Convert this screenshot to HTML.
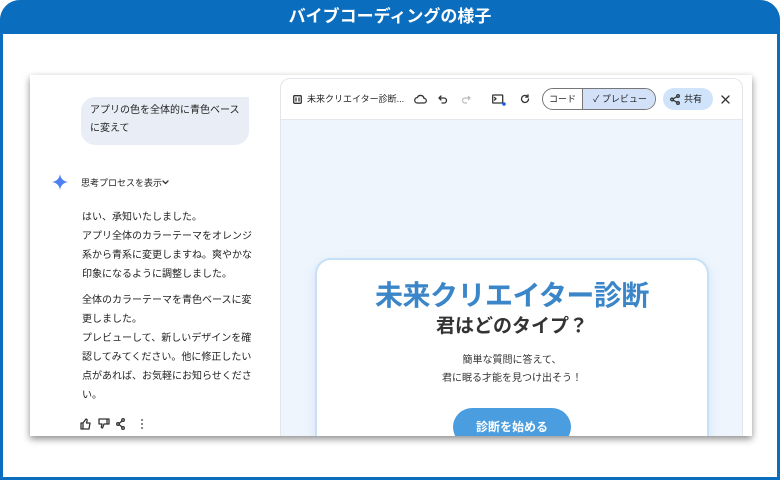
<!DOCTYPE html>
<html><head><meta charset="utf-8"><style>
*{margin:0;padding:0;box-sizing:border-box}
body{width:780px;height:480px;overflow:hidden;background:#fff;font-family:"Liberation Sans","Noto Sans CJK JP",sans-serif;position:relative}
.frame{position:absolute;left:0;top:0;width:780px;height:480px;border:3px solid #0a6dbd;border-top:none;border-radius:20px 20px 0 0}
.hdr{position:absolute;left:0;top:0;width:780px;height:34px;background:#0a6dbd;border-radius:20px 20px 0 0;color:#fff;font-weight:bold;font-size:17px;text-align:center;line-height:34px}
.shot{position:absolute;left:30px;top:75px;width:722px;height:361px;background:#fff;box-shadow:0 3px 7px rgba(0,0,0,.45);overflow:hidden}
.bubble{position:absolute;left:51px;top:22px;width:168px;height:48px;background:#e9eef6;border-radius:14px 0 14px 14px;font-size:10px;line-height:18px;padding:5px 9px;color:#222}
.t{position:absolute;font-size:10px;color:#222}
.msg{position:absolute;left:52px;top:133px;width:170px;font-size:10px;line-height:19px;color:#222}
.right{position:absolute;left:250px;top:3px;width:463px;height:370px;background:#eef5fd;border:1px solid #e2e6ea;border-radius:10px 10px 0 0;overflow:hidden}
.tb{height:41px;background:#fff;border-bottom:1px solid #e4e8ec;position:relative;font-size:9px;color:#222}
.tb span{position:absolute;top:0;line-height:41px}
.tb svg{position:absolute}
.card{position:absolute;left:34px;top:179px;width:394px;height:220px;background:#fff;border:2px solid #c5e0f7;border-radius:16px;text-align:center;box-shadow:0 4px 12px rgba(120,160,200,.2)}
svg .s{fill:none;stroke:#333;stroke-width:1.3;stroke-linecap:round;stroke-linejoin:round}
</style></head><body>
<div class="frame"></div>
<div class="hdr">バイブコーディングの様子</div>
<div class="shot">
 <div class="bubble">アプリの色を全体的に青色ベース<br>に変えて</div>
 <svg style="position:absolute;left:22px;top:99px" width="16" height="16" viewBox="0 0 16 16"><path d="M8 0C8.6 4.5 11.5 7.4 16 8C11.5 8.6 8.6 11.5 8 16C7.4 11.5 4.5 8.6 0 8C4.5 7.4 7.4 4.5 8 0Z" fill="#4c7ff0"/></svg>
 <div class="t" style="left:51px;top:101px;font-size:9px">思考プロセスを表示</div>
 <svg style="position:absolute;left:131px;top:103px" width="9" height="9" viewBox="0 0 9 9"><path class="s" d="M2 3L4.5 5.5L7 3" stroke-width="1.6"/></svg>
 <div class="msg">はい、承知いたしました。<br>アプリ全体のカラーテーマをオレンジ<br>系から青系に変更しますね。爽やかな<br>印象になるように調整しました。<div style="height:7px"></div>全体のカラーテーマを青色ベースに変<br>更しました。<br>プレビューして、新しいデザインを確<br>認してみてください。他に修正したい<br>点があれば、お気軽にお知らせくださ<br>い。</div>
 <svg style="position:absolute;left:50px;top:343px" width="70" height="12" viewBox="0 0 70 12">
  <path class="s" d="M1 5h2v6H1zM3 5l3-4c1 0 1.5 1 1 2L6.5 5H10l-1 6H3"/>
  <path class="s" d="M19 1h8v5h-3l-1.5 4c-1 0-1.5-1-1-2L22 6h-3zM27 1h2v5h-2"/>
  <circle class="s" cx="43" cy="2" r="1.3"/><circle class="s" cx="38" cy="6" r="1.3"/><circle class="s" cx="43" cy="10" r="1.3"/><path class="s" d="M39 5.5l3-2.5M39 6.5l3 2.5"/>
  <circle cx="62" cy="2" r="0.9" fill="#333"/><circle cx="62" cy="6" r="0.9" fill="#333"/><circle cx="62" cy="10" r="0.9" fill="#333"/>
 </svg>
 <div class="right">
  <div class="tb">
   <svg style="left:12px;top:16px" width="9" height="9" viewBox="0 0 9 9"><rect class="s" x=".7" y=".7" width="7.6" height="7.6" rx="1"/><path class="s" d="M3 3v3M6 3v3"/></svg>
   <span style="left:26px">未来クリエイター診断...</span>
   <svg style="left:133px;top:14px" width="13" height="12" viewBox="0 0 13 12"><path class="s" d="M3.5 10h6.5a2.3 2.3 0 0 0 0-4.6A3.5 3.5 0 0 0 3.3 4.6 2.7 2.7 0 0 0 3.5 10z"/></svg>
   <svg style="left:157px;top:15px" width="10" height="10" viewBox="0 0 10 10"><path class="s" d="M3 2L1 4l2 2M1 4h5a2.5 2.5 0 0 1 0 5H4"/></svg>
   <svg style="left:180px;top:15px" width="10" height="10" viewBox="0 0 10 10"><path d="M7 2l2 2-2 2M9 4H4a2.5 2.5 0 0 0 0 5h2" fill="none" stroke="#bbb" stroke-width="1.2"/></svg>
   <svg style="left:211px;top:15px" width="14" height="12" viewBox="0 0 14 12"><rect class="s" x=".7" y="1" width="10" height="8" rx=".5"/><path class="s" d="M2.5 3.5l1.5 1.3-1.5 1.3"/><circle cx="12" cy="10" r="1.8" fill="#1a5fe0"/></svg>
   <svg style="left:239px;top:15px" width="10" height="10" viewBox="0 0 10 10"><path class="s" d="M8.5 5A3.5 3.5 0 1 1 7.3 2.3M8 .8v2.3H5.8"/></svg>
   <div style="position:absolute;left:261px;top:9px;width:114px;height:22px;border:1px solid #777;border-radius:11px;overflow:hidden;line-height:20px">
    <div style="position:absolute;left:0;width:39px;text-align:center">コード</div>
    <div style="position:absolute;left:39px;width:75px;height:20px;background:#d3e1f8;border-left:1px solid #777;text-align:center">✓ プレビュー</div>
   </div>
   <div style="position:absolute;left:382px;top:9px;width:50px;height:22px;background:#cfe3fa;border-radius:11px;line-height:22px;text-align:center;padding-left:10px">共有</div>
   <svg style="left:389px;top:15px" width="10" height="11" viewBox="0 0 10 11"><circle class="s" cx="8" cy="2" r="1.3"/><circle class="s" cx="2" cy="5.5" r="1.3"/><circle class="s" cx="8" cy="9" r="1.3"/><path class="s" d="M3 5l4-2.5M3 6l4 2.5"/></svg>
   <svg style="left:440px;top:16px" width="9" height="9" viewBox="0 0 9 9"><path class="s" d="M1 1l7 7M8 1L1 8" stroke-width="1.5"/></svg>
  </div>
  <div class="card">
   <div style="margin-top:18px;font-size:28px;font-weight:bold;color:#3a86c8;line-height:36px;letter-spacing:-0.5px">未来クリエイター診断</div>
   <div style="font-size:19px;font-weight:bold;color:#333;line-height:26px">君はどのタイプ？</div>
   <div style="margin-top:12px;font-size:10px;line-height:18px;color:#333">簡単な質問に答えて、<br>君に眠る才能を見つけ出そう！</div>
   <div style="margin:20px auto 0;width:118px;height:38px;background:#4a9ee0;border-radius:19px;color:#fff;font-weight:bold;font-size:12px;line-height:38px">診断を始める</div>
  </div>
 </div>
</div>
</body></html>
